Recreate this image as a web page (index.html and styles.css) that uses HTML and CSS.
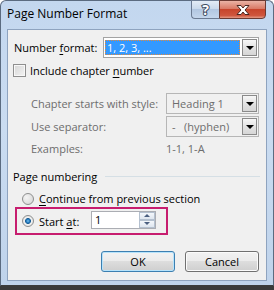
FILE: index.html
```html
<!DOCTYPE html>
<html lang="en">
<head>
<meta charset="UTF-8">
<meta name="viewport" content="width=device-width, initial-scale=1.0">
<title>Page Number Format</title>
<link rel="stylesheet" href="styles.css">
</head>
<body>
<div class="window">
  <div class="titlebar">
    <span class="title">Page Number Format</span>
    <div class="caption-buttons">
      <span class="cap-btn help">?</span>
      <span class="cap-btn close">
        <svg width="16" height="12" viewBox="0 0 16 12"><path d="M2 1.5h4l2 2.5 2-2.5h4l-4 4.5 4 4.5h-4l-2-2.5-2 2.5h-4l4-4.5z" fill="#fff" stroke="#4a2620" stroke-width="1" stroke-linejoin="round"/></svg>
      </span>
    </div>
  </div>

  <div class="client">
    <div class="row row-format">
      <label class="lbl lbl-format">Number <u>f</u>ormat:</label>
      <div class="combo combo-active">
        <span class="combo-value"><span class="sel">1, 2, 3, ...</span></span>
        <span class="drop"><i class="tri"></i></span>
      </div>
    </div>

    <div class="row row-check">
      <span class="checkbox"></span>
      <span class="check-text">Include chapter <u>n</u>umber</span>
    </div>

    <div class="row row-chapter">
      <label class="lbl lbl-sub disabled">Chapter starts with style:</label>
      <div class="combo combo-disabled">
        <span class="combo-value">Heading 1</span>
        <span class="drop"><i class="tri"></i></span>
      </div>
    </div>

    <div class="row row-sep">
      <label class="lbl lbl-sub disabled">Use separator:</label>
      <div class="combo combo-disabled">
        <span class="combo-value">-&nbsp;&nbsp;&nbsp;(hyphen)</span>
        <span class="drop"><i class="tri"></i></span>
      </div>
    </div>

    <div class="row row-examples">
      <label class="lbl lbl-sub disabled">Examples:</label>
      <span class="disabled">1-1, 1-A</span>
    </div>

    <div class="row row-group">
      <span class="group-title">Page numbering</span>
      <span class="group-line"></span>
    </div>

    <div class="row row-continue">
      <span class="radio"></span>
      <span class="radio-text"><u>C</u>ontinue from previous section</span>
    </div>

    <div class="start-box">
      <span class="radio checked"></span>
      <span class="radio-text start-label">Start <u>a</u>t:</span>
      <div class="spin">
        <span class="spin-value">1</span>
        <span class="spin-btns">
          <span class="spin-btn"><i class="tri-up"></i></span>
          <span class="spin-btn"><i class="tri-down"></i></span>
        </span>
      </div>
    </div>

    <div class="row row-buttons">
      <button class="btn btn-default">OK</button>
      <button class="btn">Cancel</button>
    </div>
  </div>
</div>
<div class="desk"></div>
</body>
</html>
```

FILE: styles.css
```css
/* Page setup */
body {
    margin: 0;
    background: #fff;
    font-family: "Open Sans", "DejaVu Sans", sans-serif;
    font-size: 11px;
    color: #000;
    white-space: nowrap;
}

/* Window frame */
.window {
    width: 274px;
    height: 286px;
    box-sizing: border-box;
    border: 1px solid #5b6b80;
    border-bottom-color: #3c3c3c;
    border-radius: 6px 6px 0 0;
    background: linear-gradient(#c3d7ef, #cadcf1 45%, #bfd3eb);
    display: flex;
    flex-direction: column;
}

.titlebar {
    height: 28px;
    display: flex;
    align-items: flex-start;
    flex: none;
}

.title {
    padding: 5px 0 0 6px;
    line-height: 16px;
    font-size: 12px;
    color: #000;
}

.caption-buttons {
    margin-left: auto;
    margin-right: 7px;
    margin-top: -1px;
    display: flex;
}

.cap-btn {
    height: 19px;
    box-sizing: border-box;
    display: flex;
    align-items: center;
    justify-content: center;
}

.help {
    width: 28px;
    border: 1px solid #6b7b92;
    border-right: none;
    border-radius: 0 0 0 4px;
    background: linear-gradient(#e3ecf6, #cbdaec 45%, #b2c7e1 50%, #c4d6ec);
    color: #fff;
    font-weight: bold;
    font-size: 14px;
    line-height: 17px;
    -webkit-text-stroke: 2px #3f4e63;
    paint-order: stroke fill;
}

.close {
    width: 47px;
    border: 1px solid #6b3a32;
    border-radius: 0 0 4px 0;
    background: linear-gradient(#eab3a5, #d97a66 45%, #c7452c 50%, #cf563d 85%, #e39a86);
}

/* Client area */
.client {
    margin: 0 6px;
    height: 252px;
    box-sizing: border-box;
    border: 1px solid #8ea3bf;
    background: #f0f0f0;
    display: flex;
    flex-direction: column;
    flex: none;
}

.row {
    display: flex;
    align-items: center;
    flex: none;
}

.lbl {
    flex: none;
}

.disabled {
    color: #6d6d6d;
}

u {
    text-underline-offset: 2px;
}

.row-format {
    margin-top: 7px;
    height: 21px;
    padding-left: 6px;
}

.lbl-format {
    width: 89px;
}

/* Combo boxes */
.combo {
    display: flex;
    height: 21px;
    box-sizing: border-box;
    border: 1px solid #a3a3a3;
}

.combo-active {
    width: 156px;
    background: #fff;
}

.combo-active .combo-value {
    flex: 1;
    padding: 2px 1px 2px 1px;
    display: flex;
}

.sel {
    flex: 1;
    background: #3399ff;
    color: #fff;
    outline: 1px dotted #e58a3a;
    outline-offset: -1px;
    padding-left: 2px;
    line-height: 15px;
}

.combo-disabled {
    width: 93px;
    border-color: #b6b6b6;
    background: #f0f0f0;
    color: #6d6d6d;
}

.combo-disabled .combo-value {
    flex: 1;
    padding-left: 5px;
    line-height: 19px;
}

.drop {
    width: 15px;
    margin: 1px;
    box-sizing: border-box;
    border: 1px solid #8a8a8a;
    background: linear-gradient(#f7f7f7, #e3e3e3 50%, #d6d6d6);
    display: flex;
    align-items: center;
    justify-content: center;
}

.tri {
    width: 0;
    height: 0;
    border-left: 4px solid transparent;
    border-right: 4px solid transparent;
    border-top: 4px solid #000;
    margin-top: 1px;
}

/* Checkbox row */
.row-check {
    height: 24px;
    padding-left: 5px;
}

.checkbox {
    width: 13px;
    height: 13px;
    box-sizing: border-box;
    border: 1px solid #8f8f8f;
    background: linear-gradient(135deg, #d6d6d6, #f4f4f4);
    box-shadow: inset 0 0 0 1px #f8f8f8;
}

.check-text {
    margin-left: 4px;
}

.row-chapter {
    margin-top: 11px;
    height: 21px;
}

.row-sep {
    margin-top: 2px;
    height: 21px;
}

.row-examples {
    height: 22px;
}

.lbl-sub {
    width: 135px;
    padding-left: 23px;
}

/* Group heading */
.row-group {
    margin-top: 6px;
    height: 22px;
    padding-left: 5px;
    padding-right: 6px;
}

.group-line {
    flex: 1;
    height: 1px;
    background: #d5dfe5;
    margin-left: 8px;
}

/* Radio buttons */
.row-continue {
    margin-top: 3px;
    height: 17px;
    padding-left: 14px;
}

.radio {
    width: 12px;
    height: 12px;
    box-sizing: border-box;
    border-radius: 50%;
    border: 1px solid #8e8f8f;
    background: radial-gradient(circle at 35% 35%, #f4f4f4, #d3d3d3);
    flex: none;
}

.radio.checked {
    background: radial-gradient(circle, #7fc3ee 0, #2a83c6 20%, #1a5d94 38%, #f2f2f2 45%, #d8d8d8 100%);
}

.radio-text {
    margin-left: 5px;
}

.start-box {
    margin: 0 0 0 7px;
    width: 153px;
    height: 28px;
    box-sizing: border-box;
    border: 2px solid #c71d6f;
    display: flex;
    align-items: center;
    padding-left: 5px;
    flex: none;
}

.start-label {
    width: 52px;
}

/* Spin box */
.spin {
    width: 65px;
    height: 18px;
    margin-top: -3px;
    box-sizing: border-box;
    border: 1px solid #abadb3;
    background: #fff;
    display: flex;
}

.spin-value {
    flex: 1;
    padding-left: 3px;
    line-height: 16px;
}

.spin-btns {
    width: 16px;
    display: flex;
    flex-direction: column;
}

.spin-btn {
    flex: 1;
    border: 1px solid #b4c0cf;
    background: linear-gradient(#f4f7fb, #dfe6ef);
    display: flex;
    align-items: center;
    justify-content: center;
}

.tri-up {
    width: 0;
    height: 0;
    border-left: 3px solid transparent;
    border-right: 3px solid transparent;
    border-bottom: 3px solid #4b5f80;
}

.tri-down {
    width: 0;
    height: 0;
    border-left: 3px solid transparent;
    border-right: 3px solid transparent;
    border-top: 3px solid #4b5f80;
}

/* Dialog buttons */
.row-buttons {
    margin-top: 16px;
    justify-content: flex-end;
    padding-right: 7px;
    gap: 10px;
}

.btn {
    width: 74px;
    height: 21px;
    box-sizing: border-box;
    border: 1px solid #707070;
    border-radius: 3px;
    background: linear-gradient(#f2f2f2, #ebebeb 45%, #dddddd 50%, #cfcfcf);
    box-shadow: inset 0 0 0 1px #fbfbfb;
    font-family: inherit;
    font-size: 11px;
    color: #000;
    padding: 0;
}

.btn-default {
    border-color: #3c7fb1;
    box-shadow: inset 0 0 0 1px #b7e3fb;
}

.desk {
    height: 4px;
    background: #3a3a3a;
}
```
